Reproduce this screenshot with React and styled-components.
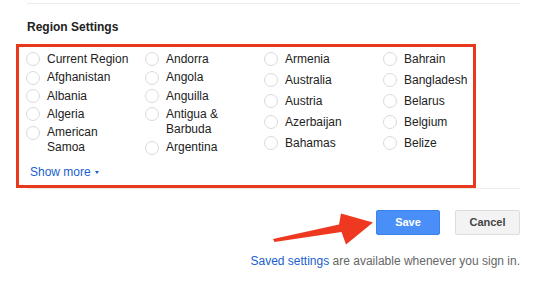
import React from "react";
import styled, { createGlobalStyle } from "styled-components";

const GlobalStyle = createGlobalStyle`
  body {
    margin: 0;
    background: #fff;
    font-family: "Liberation Sans", Arial, sans-serif;
  }
`;

const Page = styled.div`
  position: relative;
  width: 546px;
  height: 281px;
  padding-top: 3px;
  box-sizing: border-box;
  overflow: hidden;
`;

const Divider = styled.div`
  height: 1px;
  width: 493px;
  margin-left: 27px;
  background: #ebebeb;
`;

const Heading = styled.div`
  margin: 15.6px 0 0 27px;
  font-size: 12px;
  line-height: 15px;
  font-weight: 700;
  color: #222;
`;

const RedBox = styled.div`
  position: relative;
  z-index: 1;
  box-sizing: border-box;
  margin: 9.4px 0 0 16px;
  width: 460px;
  height: 144px;
  border: 3px solid #e9391d;
  padding: 5px 0 0 7px;
`;

const Grid = styled.div`
  display: grid;
  grid-template-columns: repeat(3, 119px) 1fr;
  align-items: start;
`;

const Column = styled.div`
  display: flex;
  flex-direction: column;
  gap: ${(p) => p.$gap}px;
`;

const Option = styled.label`
  display: flex;
  align-items: flex-start;
  gap: 7px;
  font-size: 12px;
  line-height: 15px;
  color: #222;
  cursor: pointer;
`;

const Radio = styled.span`
  flex: none;
  box-sizing: border-box;
  width: 14px;
  height: 14px;
  margin-top: 0.5px;
  border-radius: 50%;
  border: 1px solid #dadada;
  background: #fff;
`;

const Label = styled.span`
  max-width: 86px;
`;

const ShowMore = styled.a`
  display: inline-flex;
  align-items: center;
  gap: 4px;
  margin: 9.5px 0 0 4px;
  font-size: 12px;
  line-height: 15px;
  color: #1a5fcf;
  cursor: pointer;
  &::after {
    content: "";
    border-left: 2.5px solid transparent;
    border-right: 2.5px solid transparent;
    border-top: 3px solid #1a5fcf;
    margin-top: 1px;
  }
`;

const BottomDivider = styled(Divider)`
  margin-top: 0;
`;

const Buttons = styled.div`
  display: flex;
  justify-content: flex-end;
  gap: 15px;
  margin-top: 21px;
  padding-right: 26px;
`;

const Button = styled.button`
  box-sizing: border-box;
  height: 25px;
  width: ${(p) => p.$width}px;
  border-radius: 2px;
  font-family: inherit;
  font-size: 11px;
  font-weight: 700;
  padding: 0;
  cursor: pointer;
  border: 1px solid ${(p) => (p.$primary ? "#3a83ef" : "#dcdcdc")};
  background: ${(p) => (p.$primary ? "#4a8ff7" : "#f3f3f3")};
  color: ${(p) => (p.$primary ? "#fff" : "#444")};
`;

const Footer = styled.div`
  margin-top: 19px;
  padding-right: 26px;
  text-align: right;
  font-size: 12px;
  line-height: 15px;
  color: #666;
`;

const FooterLink = styled.a`
  color: #1a5fcf;
`;

const Arrow = styled.svg`
  position: absolute;
  left: 0;
  top: 0;
  pointer-events: none;
`;

const columns = [
  { gap: 3.3, items: ["Current Region", "Afghanistan", "Albania", "Algeria", "American Samoa"] },
  { gap: 3.3, items: ["Andorra", "Angola", "Anguilla", "Antigua & Barbuda", "Argentina"] },
  { gap: 6, items: ["Armenia", "Australia", "Austria", "Azerbaijan", "Bahamas"] },
  { gap: 6, items: ["Bahrain", "Bangladesh", "Belarus", "Belgium", "Belize"] },
];

export default function App() {
  return (
    <>
      <GlobalStyle />
      <Page>
        <Divider />
        <Heading>Region Settings</Heading>
        <RedBox>
          <Grid>
            {columns.map((col, i) => (
              <Column key={i} $gap={col.gap}>
                {col.items.map((name) => (
                  <Option key={name}>
                    <Radio />
                    <Label>{name}</Label>
                  </Option>
                ))}
              </Column>
            ))}
          </Grid>
          <ShowMore>Show more</ShowMore>
        </RedBox>
        <BottomDivider />
        <Buttons>
          <Button $primary $width={64}>Save</Button>
          <Button $width={65}>Cancel</Button>
        </Buttons>
        <Footer>
          <FooterLink>Saved settings</FooterLink> are available whenever you sign in.
        </Footer>
        <Arrow width="546" height="281" viewBox="0 0 546 281">
          <polygon
            points="273,239 339,224.5 341,213.5 373,222.5 346,244.5 341.5,232 274.5,242"
            fill="#ee3820"
            strokeLinejoin="round"
          />
        </Arrow>
      </Page>
    </>
  );
}
